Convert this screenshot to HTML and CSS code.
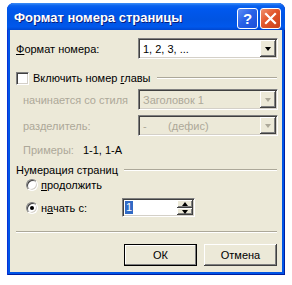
FILE: index.html
```html
<!DOCTYPE html>
<html lang="ru">
<head>
    <meta charset="UTF-8">
    <title>Формат номера страницы</title>
    <link rel="stylesheet" href="styles.css">
</head>
<body>
    <div class="window">
        <div class="titlebar">
            <span class="title">Формат номера страницы</span>
            <span class="tb-btn help">?</span>
            <span class="tb-btn close">
                <svg width="13" height="13" viewBox="0 0 13 13"><path d="M2 2 L11 11 M11 2 L2 11" stroke="#fff" stroke-width="2.2" stroke-linecap="square"/></svg>
            </span>
        </div>
        <div class="client">
            <div class="row field">
                <span><u>Ф</u>ормат номера:</span>
                <div class="combo">
                    <span class="combo-text">1, 2, 3, ...</span>
                    <span class="drop"><i class="tri down"></i></span>
                </div>
            </div>

            <div class="row group first">
                <span class="check"></span>
                <span class="group-label check-label">Включить номер <u>г</u>лавы</span>
                <span class="etch"></span>
            </div>

            <div class="row field sub disabled">
                <span>начинается со стиля</span>
                <div class="combo off">
                    <span class="combo-text">Заголовок 1</span>
                    <span class="drop"><i class="tri down"></i></span>
                </div>
            </div>
            <div class="row field sub disabled gap5">
                <span>разделитель:</span>
                <div class="combo off">
                    <span class="combo-text">-&nbsp;&nbsp;&nbsp;&nbsp;&nbsp;&nbsp;&nbsp;(дефис)</span>
                    <span class="drop"><i class="tri down"></i></span>
                </div>
            </div>
            <div class="row sub example">
                <span class="grey">Примеры:</span>
                <span class="ex-value">1-1, 1-А</span>
            </div>

            <div class="row group numbering">
                <span class="group-label">Нумерация страниц</span>
                <span class="etch"></span>
            </div>
            <div class="row option">
                <span class="radio"></span>
                <span><u>п</u>родолжить</span>
            </div>
            <div class="row option start">
                <span class="radio on"></span>
                <span class="start-label">н<u>а</u>чать с:</span>
                <div class="spin">
                    <span class="spin-text"><span class="sel">1</span></span>
                    <span class="spin-btns">
                        <span class="spin-btn"><i class="tri up"></i></span>
                        <span class="spin-btn"><i class="tri down"></i></span>
                    </span>
                </div>
            </div>

            <div class="separator"></div>

            <div class="row buttons">
                <span class="btn default">ОК</span>
                <span class="btn">Отмена</span>
            </div>
        </div>
    </div>
</body>
</html>
```

FILE: styles.css
```css
body {
    margin: 0;
    background: #fff;
    font-family: "Liberation Sans", Arial, sans-serif;
    font-size: 11px;
    color: #000;
}
u {
    text-decoration: underline;
    text-underline-offset: 1px;
}
.window {
    margin: 3px 0 0 7px;
    width: 278px;
    height: 272px;
    background: #0055e5;
    border-radius: 7px 7px 0 0;
    box-shadow: inset 1px 0 #0831d9, inset -1px 0 #001ea0, inset 0 -1px #001ea0;
    display: flex;
    flex-direction: column;
}
.titlebar {
    height: 27px;
    flex: none;
    display: flex;
    align-items: center;
    padding: 0 4px 0 7px;
    border-radius: 7px 7px 0 0;
    background: linear-gradient(to bottom, #3d8ef7 0%, #0a62ee 10%, #0058ee 22%, #0054e3 60%, #0058ec 88%, #0047d0 100%);
}
.title {
    color: #fff;
    font-weight: bold;
    font-size: 13px;
    text-shadow: 1px 1px #0a1e7c;
    flex: 1;
    padding-top: 2px;
}
.tb-btn {
    width: 19px;
    height: 19px;
    border: 1px solid #fff;
    border-radius: 3px;
    display: flex;
    align-items: center;
    justify-content: center;
    margin-top: 3px;
    color: #fff;
    font-weight: bold;
    font-size: 15px;
}
.help {
    background: linear-gradient(135deg, #5f8ff5 0%, #2a62e8 45%, #1b4fd8 100%);
    margin-right: 2px;
}
.close {
    background: linear-gradient(135deg, #f0926f 0%, #e2562b 45%, #c8401c 100%);
}
.client {
    flex: 1;
    margin: 0 3px 3px 3px;
    background: #ece9d8;
    padding: 8px 4px 0 6px;
    display: flex;
    flex-direction: column;
}
.row {
    display: flex;
    align-items: center;
}
.field {
    height: 21px;
    justify-content: space-between;
}
.combo {
    width: 136px;
    height: 17px;
    background: #fff;
    border: 1px solid;
    border-color: #808080 #fff #fff #808080;
    box-shadow: inset 1px 1px #404040, inset -1px -1px #d4d0c8;
    display: flex;
    align-items: center;
    padding: 1px;
}
.combo-text {
    flex: 1;
    padding-left: 3px;
}
.combo.off {
    background: #ece9d8;
    color: #aca899;
}
.drop, .spin-btn {
    background: #ece9d8;
    display: flex;
    align-items: center;
    justify-content: center;
    box-shadow: inset -1px -1px #404040, inset 1px 1px #fff, inset -2px -2px #808080;
}
.drop {
    width: 16px;
    height: 17px;
}
.tri {
    width: 0;
    height: 0;
    border-left: 3.5px solid transparent;
    border-right: 3.5px solid transparent;
}
.tri.down {
    border-top: 4px solid #000;
    margin-top: 1px;
}
.tri.up {
    border-bottom: 4px solid #000;
}
.off .tri.down {
    border-top-color: #aca899;
}
.group {
    height: 14px;
}
.first {
    margin-top: 12px;
}
.check {
    width: 11px;
    height: 11px;
    background: #fff;
    border: 1px solid;
    border-color: #808080 #fff #fff #808080;
    box-shadow: inset 1px 1px #404040, inset -1px -1px #d4d0c8;
    margin-right: 4px;
}
.group-label {
    white-space: nowrap;
    padding-right: 6px;
}
.etch {
    flex: 1;
    height: 0;
    border-top: 1px solid #aca899;
    border-bottom: 1px solid #fff;
    margin-right: 1px;
}
.sub {
    padding-left: 7px;
}
.disabled, .grey {
    color: #aca899;
}
.field.sub {
    margin-top: 4px;
}
.gap5 {
    margin-top: 5px !important;
}
.example {
    height: 14px;
    margin-top: 7px;
}
.ex-value {
    margin-left: 9px;
}
.numbering {
    margin-top: 6px;
}
.option {
    height: 14px;
    margin-top: 1px;
    padding-left: 10px;
}
.radio {
    width: 10px;
    height: 10px;
    border-radius: 50%;
    background: #fff;
    border: 1px solid;
    border-color: #808080 #fff #fff #808080;
    box-shadow: inset 1px 1px #404040, inset -1px -1px #d4d0c8;
    margin-right: 3px;
    display: flex;
    align-items: center;
    justify-content: center;
}
.radio.on::after {
    content: "";
    width: 4px;
    height: 4px;
    border-radius: 50%;
    background: #000;
}
.start {
    height: 19px;
    margin-top: 6px;
}
.start-label {
    width: 81px;
}
.spin {
    width: 69px;
    height: 15px;
    background: #fff;
    border: 1px solid;
    border-color: #808080 #fff #fff #808080;
    box-shadow: inset 1px 1px #404040, inset -1px -1px #d4d0c8;
    padding: 1px;
    display: flex;
}
.spin-text {
    flex: 1;
    padding-left: 1px;
    display: flex;
    align-items: center;
}
.sel {
    background: #316ac5;
    color: #fff;
    padding: 0 1px;
    line-height: 13px;
}
.spin-btns {
    width: 16px;
    display: flex;
    flex-direction: column;
}
.spin-btn {
    flex: 1;
}
.separator {
    margin-top: 14px;
    border-top: 1px solid #aca899;
    border-bottom: 1px solid #fff;
    margin-right: 1px;
}
.buttons {
    margin-top: 11px;
    justify-content: flex-end;
    gap: 7px;
    padding-right: 1px;
}
.btn {
    width: 73px;
    height: 22px;
    background: #ece9d8;
    display: flex;
    align-items: center;
    justify-content: center;
    box-sizing: border-box;
    box-shadow: inset -1px -1px #404040, inset 1px 1px #fff, inset -2px -2px #808080;
}
.btn.default {
    border: 1px solid #000;
    box-shadow: inset -1px -1px #808080, inset 1px 1px #fff;
}
```
